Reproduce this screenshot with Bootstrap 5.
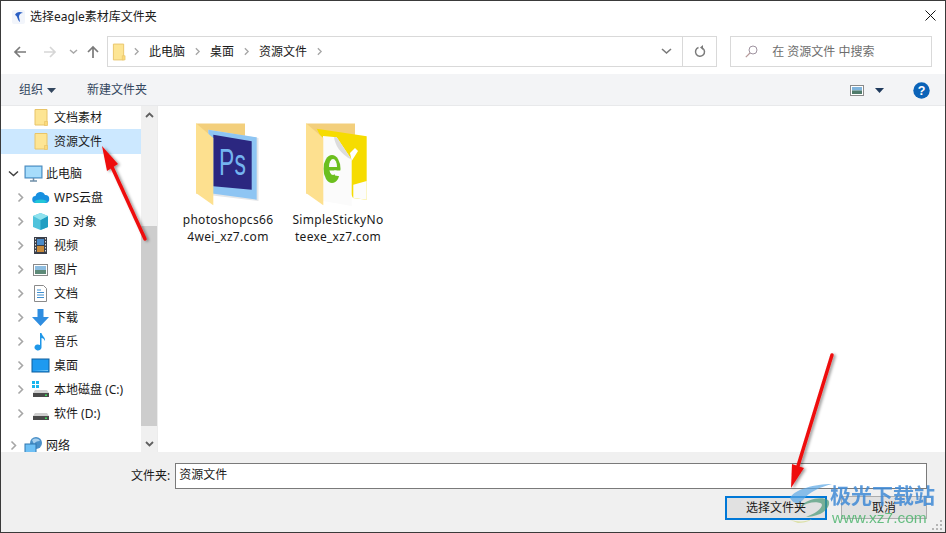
<!DOCTYPE html>
<html lang="zh-CN">
<head>
    <meta charset="UTF-8">
    <title>选择eagle素材库文件夹</title>
    <link href="https://cdn.jsdelivr.net/npm/bootstrap@5.3.0/dist/css/bootstrap.min.css" rel="stylesheet">
    <style>
        html, body { height: 533px; overflow: hidden; background: #fff; }
        body { font-family: "Noto Sans", "Noto Sans CJK SC", sans-serif; font-size: 12px; color: #1a1a1a; line-height: 1.35; }
        .dlg { height: 533px; border: 1px solid #3a3a3a; position: relative; background: #fff; }
        .title-row { height: 31px; padding-left: 11px; }
        .title-row .ttl { margin-left: 5px; margin-top: 2px; }
        .close-x { margin-left: auto; margin-right: 9px; margin-bottom: 2px; }
        .nav-row { height: 42px; padding: 4px 13px 7px 12px; }
        .nav-btns { width: 94px; }
        .addr { width: 611px; height: 31px; border: 1px solid #d9d9d9; }
        .addr-main { flex: 1; padding-left: 4px; }
        .crumb { margin: 2px 8px 0 8px; }
        .refresh-btn { width: 34px; border-left: 1px solid #d9d9d9; height: 100%; }
        .search-box { width: 202px; height: 31px; border: 1px solid #d9d9d9; margin-left: 13px; padding-left: 14px; color: #6d6d6d; }
        .search-box span { margin-left: 14px; margin-top: 2px; }
        .tool-row { height: 32px; background: #f3f4f6; border-bottom: 1px solid #e8e9eb; padding: 2px 15px 0 18px; color: #33475f; }
        .main-row { height: 346px; }
        .side { width: 140px; overflow: hidden; }
        .tree-row { height: 24px; white-space: nowrap; }
        .tree-row > span:last-child { margin-top: 2px; }
        .tree-row.sel { background: #cce8ff; height: 25px; }
        .tree-row.gap-top { margin-top: 7px; }
        .tree-row.gap-wide { margin-top: 8px; }
        .lv1 .chev { margin-left: 7px; }
        .lv2 .chev { margin-left: 14px; }
        .chev { width: 11px; flex: none; }
        .tree-ico { flex: none; margin-left: 5px; margin-right: 4px; width: 19px; height: 19px; }
        .lv1 .tree-ico { margin-right: 3px; }
        .scroller { width: 16px; background: #f0f0f0; }
        .scroll-end { height: 17px; }
        .scroll-thumb { height: 200px; margin-top: 103px; background: #cdcdcd; }
        .scroll-rest { flex: 1; }
        .files { flex: 1; border-left: 1px solid #ececec; padding: 17px 0 0 24px; gap: 18px; }
        .file-item { width: 92px; text-align: center; line-height: 17px; letter-spacing: .3px; word-break: break-all; }
        .file-item svg { display: block; margin: 0 0 4px 14px; }
        .foot { height: 80px; background: #f0f0f0; }
        .path-row { padding: 11px 18px 0 130px; }
        .path-input { flex: 1; height: 26px; border: 1px solid #7a7a7a; background: #fff; padding-left: 3px; line-height: 22px; margin-left: 5px; }
        .btn-row { padding: 7px 18px 0 0; gap: 14px; }
        .win-btn { height: 23px; background: #e1e1e1; border: 1px solid #adadad; border-radius: 0; padding: 0; font-size: 12px; color: #1a1a1a; width: 86px; line-height: 20px; }
        .win-btn.act { width: 102px; border: 2px solid #0078d7; height: 24px; }
        .arrows { position: absolute; left: -1px; top: -1px; pointer-events: none; }
        .wm-a { position: absolute; left: 829px; top: 481px; font-size: 21px; font-weight: 700; color: #3f8ad6; line-height: 26px; opacity: .85; }
        .wm-b { position: absolute; left: 831px; top: 508px; font-family: "Liberation Sans", sans-serif; font-size: 15.5px; color: #4fb56f; line-height: 18px; opacity: .85; }
    </style>
</head>
<body class="m-0">
<svg width="0" height="0" class="position-absolute">
    <defs>
        <symbol id="i-folder" viewBox="0 0 19 19">
            <path d="M4 1.500h12v15.500H4z" fill="#fde594" stroke="#e8c468"/>
            <path d="M13.500 13.500h3v4h-3z" fill="#fbd97a" stroke="#e8c468" stroke-width=".7"/>
        </symbol>
        <symbol id="i-chev-r" viewBox="0 0 11 11"><path d="M3.500 1.500l4 4-4 4" fill="none" stroke="#a6a6a6" stroke-width="1.600"/></symbol>
        <symbol id="i-chev-d" viewBox="0 0 11 11"><path d="M1 3.500l4.500 4 4.500-4" fill="none" stroke="#404040" stroke-width="1.500"/></symbol>
    </defs>
</svg>

<div class="dlg d-flex flex-column">
    <div class="title-row d-flex align-items-center">
        <svg width="13" height="14" viewBox="0 0 13 14"><rect width="13" height="14" rx="2" fill="#f2f5fb"/><path d="M3 5C4 2 8 1 11 3 8 3 7 5 7 7l1 5C5 10 6 6 3 5z" fill="#2a5fc4"/></svg>
        <span class="ttl">选择eagle素材库文件夹</span>
        <svg class="close-x" width="11" height="11" viewBox="0 0 11 11"><path d="M.5.5l10 10M10.500.5l-10 10" stroke="#111" stroke-width="1"/></svg>
    </div>

    <div class="nav-row d-flex align-items-center">
        <div class="nav-btns d-flex align-items-center">
            <svg width="14" height="14" viewBox="0 0 14 14"><path d="M13 7H2M7 2L2 7l5 5" fill="none" stroke="#7a7a7a" stroke-width="1.700"/></svg>
            <svg class="ms-3" width="14" height="14" viewBox="0 0 14 14"><path d="M1 7h11M7 2l5 5-5 5" fill="none" stroke="#d6d6d6" stroke-width="1.700"/></svg>
            <svg style="margin-left:12px" width="9" height="9" viewBox="0 0 9 9"><path d="M1 3l3.500 3L8 3" fill="none" stroke="#a8a8a8" stroke-width="1.500"/></svg>
            <svg style="margin-left:8px" width="14" height="14" viewBox="0 0 14 14"><path d="M7 13V2M2 7l5-5 5 5" fill="none" stroke="#7a7a7a" stroke-width="1.700"/></svg>
        </div>
        <div class="addr d-flex align-items-center">
            <div class="addr-main d-flex align-items-center">
                <svg width="14" height="18" viewBox="0 0 15 18"><path d="M1.500.5h11v17h-11z" fill="#fde594" stroke="#e8c468"/><path d="M11 13h3v4.500h-3z" fill="#fbd97a" stroke="#e8c468" stroke-width=".7"/></svg>
                <svg style="margin-left:6px" width="9" height="9" viewBox="0 0 11 11"><use href="#i-chev-r"/></svg>
                <span class="crumb">此电脑</span>
                <svg width="9" height="9" viewBox="0 0 11 11"><use href="#i-chev-r"/></svg>
                <span class="crumb">桌面</span>
                <svg width="9" height="9" viewBox="0 0 11 11"><use href="#i-chev-r"/></svg>
                <span class="crumb">资源文件</span>
                <svg width="9" height="9" viewBox="0 0 11 11"><use href="#i-chev-r"/></svg>
                <svg class="ms-auto" style="margin-right:10px" width="11" height="9" viewBox="0 0 11 9"><path d="M1 2l4.500 4L10 2" fill="none" stroke="#7a7a7a" stroke-width="1.600"/></svg>
            </div>
            <div class="refresh-btn d-flex align-items-center justify-content-center">
                <svg width="12" height="13" viewBox="0 0 12 13"><path d="M4.500 2.500a4.500 4.500 0 1 0 4 .5" fill="none" stroke="#7a7a7a" stroke-width="1.500"/><path d="M9 0v5L6 2.500z" fill="#7a7a7a"/></svg>
            </div>
        </div>
        <div class="search-box d-flex align-items-center">
            <svg width="13" height="13" viewBox="0 0 13 13"><circle cx="8" cy="5" r="4" fill="none" stroke="#9f93a0"/><path d="M5 8L.8 12.200" stroke="#b79a9a" stroke-width="1.200"/></svg>
            <span>在 资源文件 中搜索</span>
        </div>
    </div>

    <div class="tool-row d-flex align-items-center">
        <span>组织</span>
        <svg class="ms-1" width="9" height="5" viewBox="0 0 9 5"><path d="M0 0h9L4.500 5z" fill="#33475f"/></svg>
        <span style="margin-left:31px">新建文件夹</span>
        <svg class="ms-auto" width="14" height="11" viewBox="0 0 14 11"><rect x=".5" y=".5" width="13" height="10" fill="#fff" stroke="#8a8a8a"/><rect x="2" y="2" width="10" height="3.500" fill="#7fb4dc"/><rect x="2" y="5.500" width="10" height="3.500" fill="#4f7a6a"/></svg>
        <svg style="margin-left:11px" width="9" height="5" viewBox="0 0 9 5"><path d="M0 0h9L4.500 5z" fill="#1f3a5c"/></svg>
        <svg style="margin-left:29px" width="17" height="17" viewBox="0 0 17 17"><circle cx="8.500" cy="8.500" r="8.200" fill="#0b63b8"/><text x="8.500" y="13" text-anchor="middle" font-family="Liberation Sans" font-weight="700" font-size="12.500" fill="#fff">?</text></svg>
    </div>

    <div class="main-row d-flex">
        <div class="side">
            <div class="tree-row lv2 d-flex align-items-center" style="margin-top:-1px">
                <span class="chev"></span><svg class="tree-ico"><use href="#i-folder"/></svg><span>文档素材</span>
            </div>
            <div class="tree-row lv2 sel d-flex align-items-center">
                <span class="chev"></span><svg class="tree-ico"><use href="#i-folder"/></svg><span>资源文件</span>
            </div>
            <div class="tree-row lv1 gap-top d-flex align-items-center">
                <svg class="chev" height="11" viewBox="0 0 11 11"><use href="#i-chev-d"/></svg>
                <svg class="tree-ico" viewBox="0 0 19 19"><rect x="1" y="2" width="17" height="12" fill="#7cc7f5" stroke="#4a86b8"/><rect x="2" y="3" width="15" height="10" fill="#a6dcfb"/><path d="M6 17h7M9.500 14v3" stroke="#6f8ea8" stroke-width="1.500"/></svg>
                <span>此电脑</span>
            </div>
            <div class="tree-row lv2 d-flex align-items-center">
                <svg class="chev" height="11" viewBox="0 0 11 11"><use href="#i-chev-r"/></svg>
                <svg class="tree-ico" viewBox="0 0 19 19"><path d="M5 15a3.500 3.500 0 0 1-.5-7A5 5 0 0 1 14 7a4 4 0 0 1 .5 8z" fill="#1790e0"/><path d="M3 14c3-3 8-3 13-1-1 2-3 2-4 2H5z" fill="#22c6d8"/></svg>
                <span>WPS云盘</span>
            </div>
            <div class="tree-row lv2 d-flex align-items-center">
                <svg class="chev" height="11" viewBox="0 0 11 11"><use href="#i-chev-r"/></svg>
                <svg class="tree-ico" viewBox="0 0 19 19"><path d="M9.500 1L17 4v11l-7.500 3L2 15V4z" fill="#4fc3dc"/><path d="M9.500 8L17 4v11l-7.500 3z" fill="#1f9ec2"/><path d="M9.500 8L2 4l7.500-3L17 4z" fill="#8fe2ee"/></svg>
                <span>3D 对象</span>
            </div>
            <div class="tree-row lv2 d-flex align-items-center">
                <svg class="chev" height="11" viewBox="0 0 11 11"><use href="#i-chev-r"/></svg>
                <svg class="tree-ico" viewBox="0 0 19 19"><rect x="3" y="1" width="13" height="17" fill="#3a3f4a"/><rect x="6" y="3" width="7" height="6" fill="#4a8ac8"/><rect x="6" y="10" width="7" height="6" fill="#c88a3a"/><path d="M4.500 2v15M14.500 2v15" stroke="#ddd" stroke-dasharray="1.500 1.500"/></svg>
                <span>视频</span>
            </div>
            <div class="tree-row lv2 d-flex align-items-center">
                <svg class="chev" height="11" viewBox="0 0 11 11"><use href="#i-chev-r"/></svg>
                <svg class="tree-ico" viewBox="0 0 19 19"><rect x="2.500" y="4.500" width="14" height="11" fill="#fff" stroke="#8a8a8a"/><rect x="4" y="6" width="11" height="4" fill="#8dbde0"/><rect x="4" y="10" width="11" height="4" fill="#5d8a78"/></svg>
                <span>图片</span>
            </div>
            <div class="tree-row lv2 d-flex align-items-center">
                <svg class="chev" height="11" viewBox="0 0 11 11"><use href="#i-chev-r"/></svg>
                <svg class="tree-ico" viewBox="0 0 19 19"><path d="M3.500 1.500h9l3 3v13h-12z" fill="#fff" stroke="#8a8a8a"/><path d="M6 6h4M6 8.500h7M6 11h7M6 13.500h7" stroke="#3f8fd0"/></svg>
                <span>文档</span>
            </div>
            <div class="tree-row lv2 d-flex align-items-center">
                <svg class="chev" height="11" viewBox="0 0 11 11"><use href="#i-chev-r"/></svg>
                <svg class="tree-ico" viewBox="0 0 19 19"><path d="M6.500 1h6v8h5.500l-8.500 9L1 9h5.500z" fill="#2f8de0"/></svg>
                <span>下载</span>
            </div>
            <div class="tree-row lv2 d-flex align-items-center">
                <svg class="chev" height="11" viewBox="0 0 11 11"><use href="#i-chev-r"/></svg>
                <svg class="tree-ico" viewBox="0 0 19 19"><path d="M9 1h1.500c.5 3 4 4 3.500 8-1-2-2-3-3.500-3v9.500a3.500 3 0 1 1-1.500-2.500z" fill="#1f97e8"/></svg>
                <span>音乐</span>
            </div>
            <div class="tree-row lv2 d-flex align-items-center">
                <svg class="chev" height="11" viewBox="0 0 11 11"><use href="#i-chev-r"/></svg>
                <svg class="tree-ico" viewBox="0 0 19 19"><rect x="1" y="3" width="17" height="13" fill="#1e9af0" stroke="#0f5f9e"/><path d="M2 15l15-1v1z" fill="#7ccbf7"/></svg>
                <span>桌面</span>
            </div>
            <div class="tree-row lv2 d-flex align-items-center">
                <svg class="chev" height="11" viewBox="0 0 11 11"><use href="#i-chev-r"/></svg>
                <svg class="tree-ico" viewBox="0 0 19 19"><path d="M1 1h3v3H1zM5 1h3v3H5zM1 5h3v3H1zM5 5h3v3H5z" fill="#19b6ee"/><path d="M4 10h12l2 3H2z" fill="#cfcfcf"/><rect x="2" y="13" width="16" height="4" fill="#4a4a4a"/><rect x="14" y="14.500" width="2" height="1.500" fill="#3ddc5a"/></svg>
                <span>本地磁盘 (C:)</span>
            </div>
            <div class="tree-row lv2 d-flex align-items-center">
                <svg class="chev" height="11" viewBox="0 0 11 11"><use href="#i-chev-r"/></svg>
                <svg class="tree-ico" viewBox="0 0 19 19"><path d="M4 9h12l2 3H2z" fill="#cfcfcf"/><rect x="2" y="12" width="16" height="4" fill="#4a4a4a"/><rect x="14" y="13.500" width="2" height="1.500" fill="#3ddc5a"/></svg>
                <span>软件 (D:)</span>
            </div>
            <div class="tree-row lv1 gap-wide d-flex align-items-center">
                <svg class="chev" height="11" viewBox="0 0 11 11"><use href="#i-chev-r"/></svg>
                <svg class="tree-ico" viewBox="0 0 19 19"><circle cx="12" cy="7" r="6" fill="#4a90c8"/><path d="M8 4c3-2 6-2 8 1-3 0-5 1-6 3z" fill="#a8d0ee"/><rect x="1" y="8" width="11" height="9" fill="#6ec0f5" stroke="#2f76b0"/></svg>
                <span>网络</span>
            </div>
        </div>
        <div class="scroller d-flex flex-column">
            <div class="scroll-end d-flex align-items-center justify-content-center"><svg width="9" height="6" viewBox="0 0 9 6"><path d="M1 5l3.500-3.500L8 5" fill="none" stroke="#606060" stroke-width="1.800"/></svg></div>
            <div class="scroll-thumb"></div>
            <div class="scroll-rest"></div>
            <div class="scroll-end d-flex align-items-center justify-content-center"><svg width="9" height="6" viewBox="0 0 9 6"><path d="M1 1l3.500 3.500L8 1" fill="none" stroke="#606060" stroke-width="1.800"/></svg></div>
        </div>
        <div class="files d-flex align-items-start">
            <div class="file-item">
                <svg width="64" height="84" viewBox="0 0 64 84">
                    <path d="M0 .5h49v70H0z" fill="#f3cf7c"/>
                    <path d="M12.300 6.700L62.500 15v63l-50-6z" fill="#e4e6e8"/>
                    <path d="M12.300 6.700L60.700 14.300v62.400L12.300 70z" fill="#8ec5f3"/>
                    <path d="M17.300 11.700L55.700 18.300v48.400L17.300 63.300z" fill="#2b2780"/>
                    <text x="23" y="52" font-family="Liberation Sans" font-size="37" fill="#74b4f0" textLength="27" lengthAdjust="spacingAndGlyphs">Ps</text>
                    <path d="M0 .3L17.300 15v67.300L0 70z" fill="#fde08f"/>
                </svg>
                photoshopcs664wei_xz7.com
            </div>
            <div class="file-item">
                <svg width="64" height="84" viewBox="0 0 64 84">
                    <path d="M0 .5h49v70H0z" fill="#f3cf7c"/>
                    <path d="M10.700 5.700L60.700 13.300v63.400L47 75z" fill="#f6dc00"/>
                    <path d="M47.300 61.700L60.700 58v18.700L47.300 75z" fill="#fcfcfc"/>
                    <path d="M44 30l5-5 3 3-6.300 10z" fill="#fff"/>
                    <path d="M17 13l13.700 1.300 15 22.400V83L17 78z" fill="#fbfbfb"/>
                    <path d="M28 14c1 8 6 17 17.700 22.700L30.700 14.300z" fill="#dcdcdc"/>
                    <ellipse cx="26" cy="46" rx="8.500" ry="14" fill="#6cbf1e"/>
                    <ellipse cx="27" cy="44" rx="4" ry="8" fill="#fbfbfb"/>
                    <path d="M21 44h13v3.500H21z" fill="#6cbf1e"/>
                    <path d="M28 47.500h7v6l-6-1z" fill="#fbfbfb"/>
                    <path d="M0 .3L17.300 15v67.300L0 70z" fill="#fde08f"/>
                </svg>
                SimpleStickyNoteexe_xz7.com
            </div>
        </div>
    </div>

    <div class="foot">
        <div class="path-row d-flex align-items-center">
            <span>文件夹:</span>
            <div class="path-input">资源文件</div>
        </div>
        <div class="btn-row d-flex justify-content-end align-items-start">
            <button type="button" class="btn win-btn act">选择文件夹</button>
            <button type="button" class="btn win-btn">取消</button>
        </div>
    </div>

    <div class="wm-a">极光下载站</div>
    <div class="wm-b">www.xz7.com</div>

    <svg class="arrows" width="946" height="533" viewBox="0 0 946 533">
        <defs><filter id="sh" x="-30%" y="-30%" width="160%" height="160%"><feDropShadow dx="2" dy="1" stdDeviation="1.500" flood-color="#000" flood-opacity=".4"/></filter></defs>
        <g filter="url(#sh)">
            <path d="M145 239L112 167" stroke="#ee0f0f" stroke-width="3.500" stroke-linecap="round"/>
            <path d="M102 146L107 171 118 164z" fill="#ee0f0f"/>
            <path d="M832 355L798 466" stroke="#ee0f0f" stroke-width="3.500" stroke-linecap="round"/>
            <path d="M791 488L792 464 804 468z" fill="#ee0f0f"/>
        </g>
        <path d="M832 484C815 484 795 489 790 498c4 7 9 6 13 2 6-8 17-13 29-16z" fill="#5aa6e6" opacity=".7"/>
        <path d="M800 507c6-8 22-11 28-7 3 3 0 10-8 14-5 2-10 3-14 3 8-3 15-7 16-12 0-4-14-4-22 2z" fill="#4a9a78" opacity=".7"/>
        <path d="M790 520c8 2 16 2 22-1-4 3-10 4-14 4z" fill="#d9dfa0" opacity=".9"/>
        <g fill="#b5b5b5"><rect x="940" y="520" width="2" height="2"/><rect x="936" y="524" width="2" height="2"/><rect x="940" y="524" width="2" height="2"/><rect x="932" y="528" width="2" height="2"/><rect x="936" y="528" width="2" height="2"/><rect x="940" y="528" width="2" height="2"/></g>
    </svg>
</div>
</body>
</html>
